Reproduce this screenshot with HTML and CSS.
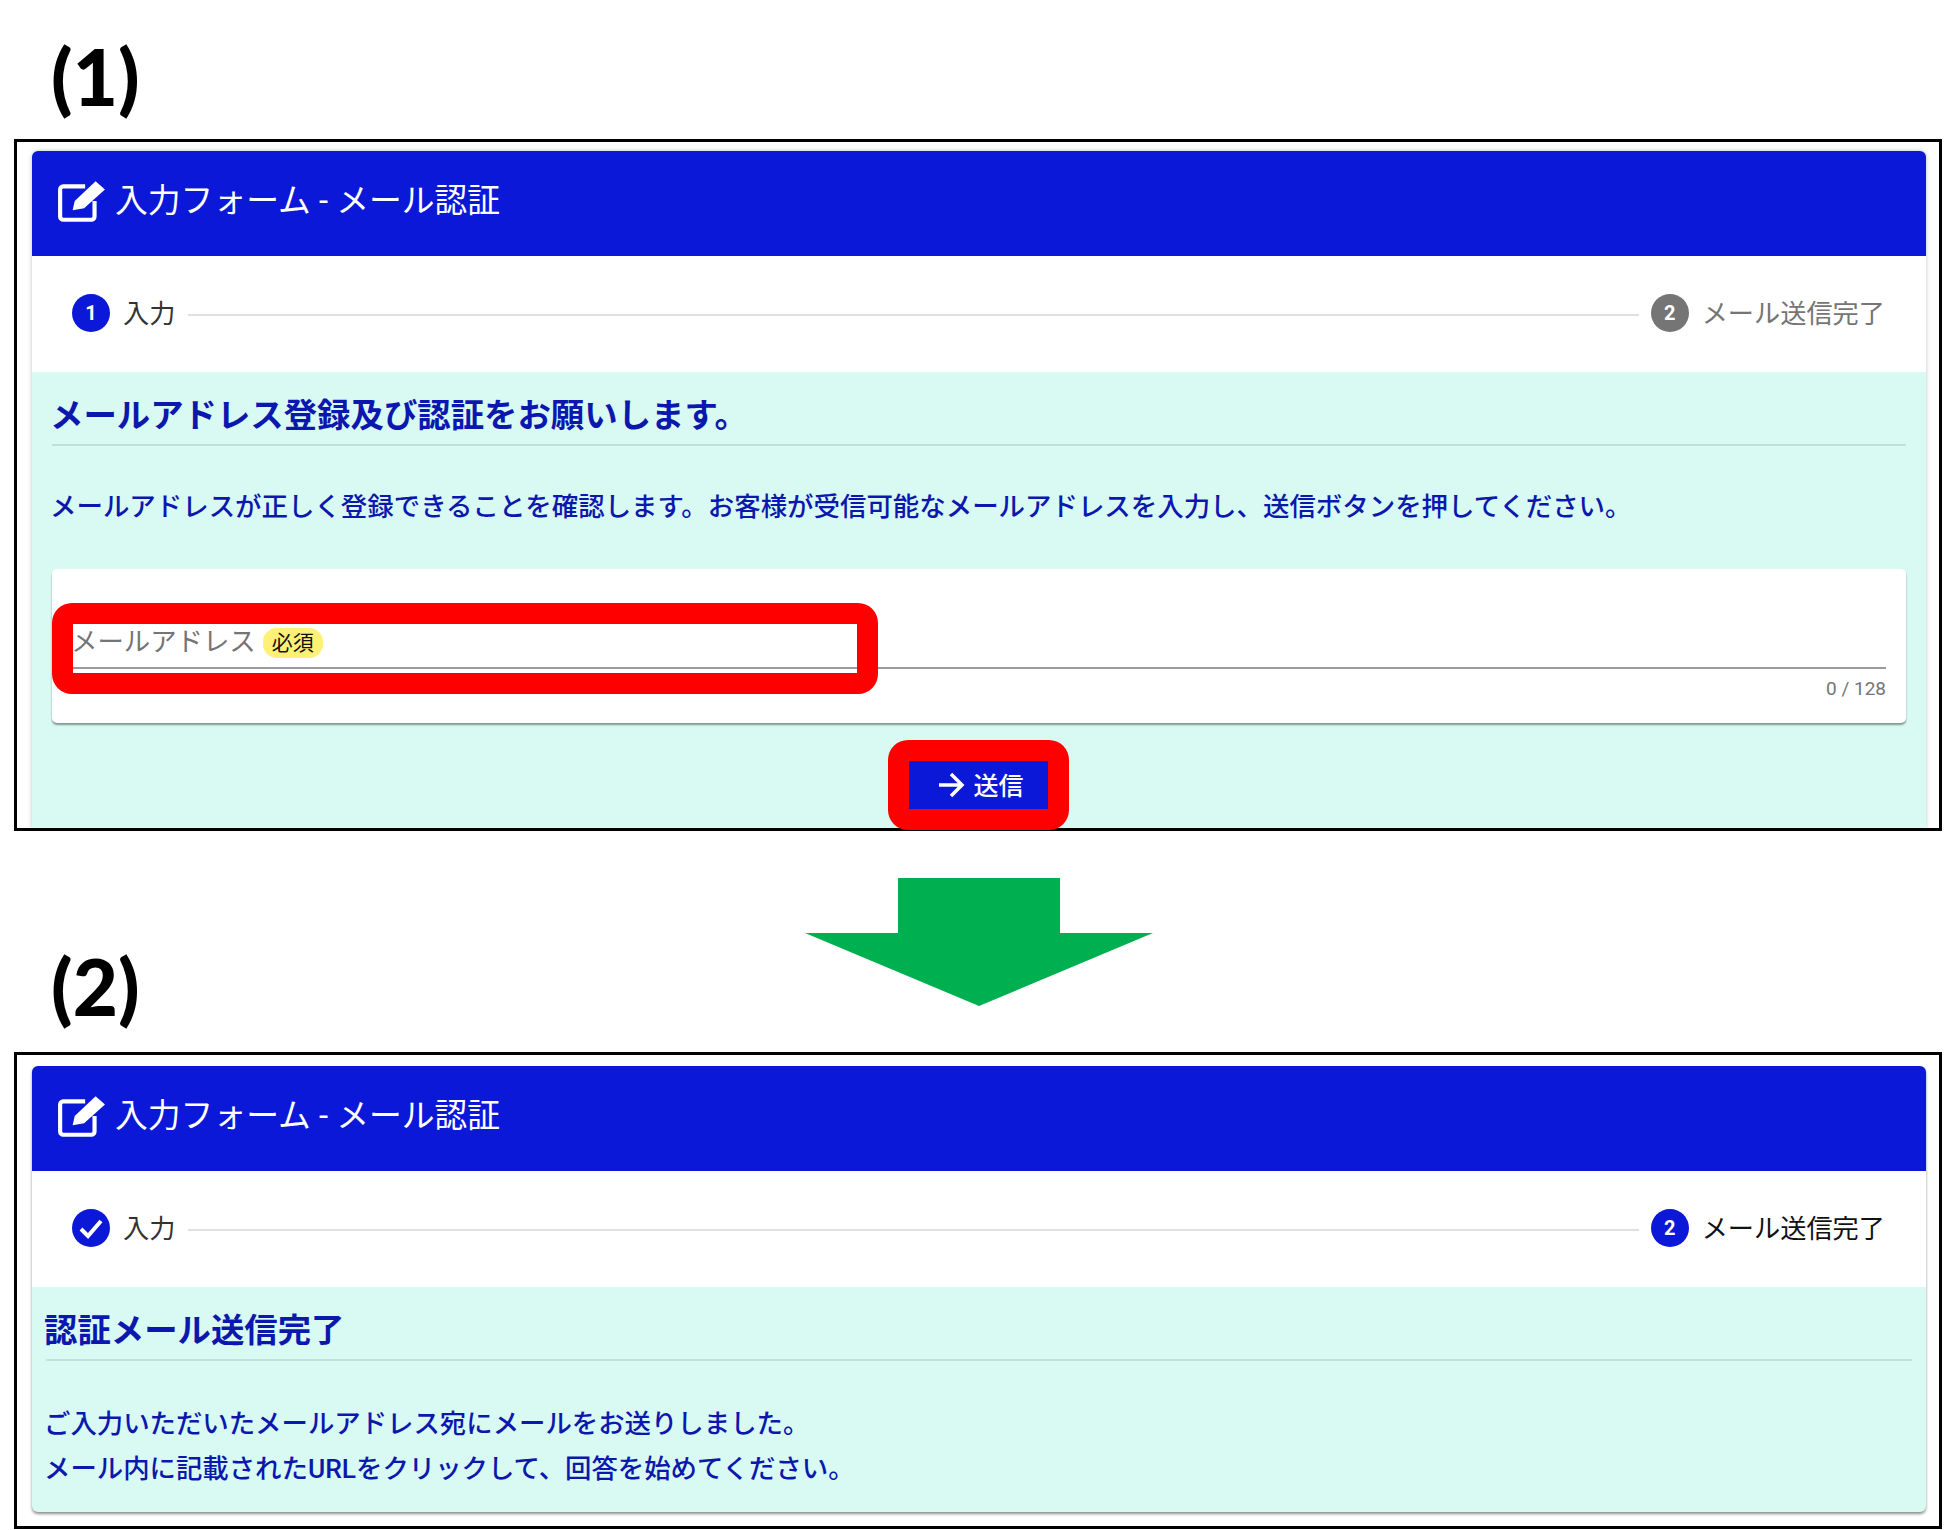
FILE: index.html
```html
<!DOCTYPE html>
<html lang="ja">
<head>
<meta charset="utf-8">
<title>メール認証</title>
<link rel="stylesheet" href="styles.css">
</head>
<body>
<main class="page">
  <div class="label-top"><span class="label">(1)</span></div>
  <section class="frame frame-one">
    <div class="card">
      <header class="card-head">
        <svg class="edit-icon" viewBox="0 0 47 41"><path class="edit-box" d="M27 6H6a3 3 0 0 0-3 3v26a3 3 0 0 0 3 3h27a3 3 0 0 0 3-3V20"/><path class="edit-pen" d="M15 29l2-9L37 1l9 8-20 18z"/></svg>
        <span class="card-name">入力フォーム - メール認証</span>
      </header>
      <div class="stepper">
        <span class="step-dot">1</span><span class="step-text">入力</span>
        <span class="step-line"></span>
        <span class="step-dot dot-off">2</span><span class="step-text text-off">メール送信完了</span>
      </div>
      <div class="body body-one">
        <h2 class="title">メールアドレス登録及び認証をお願いします。</h2>
        <p class="intro">メールアドレスが正しく登録できることを確認します。お客様が受信可能なメールアドレスを入力し、送信ボタンを押してください。</p>
        <div class="field-card">
          <div class="field"><span class="placeholder">メールアドレス</span><span class="badge">必須</span></div>
          <div class="counter">0 / 128</div>
        </div>
        <div class="actions">
          <button class="send" type="button">
            <svg class="send-icon" viewBox="0 0 28 28"><path d="M2 14h23M14 3l11 11-11 11"/></svg>
            <span class="send-text">送信</span>
          </button>
        </div>
      </div>
    </div>
    <div class="mark mark-field"></div>
    <div class="mark mark-send"></div>
  </section>
  <div class="between">
    <svg class="down-arrow" viewBox="0 0 348 128"><path d="M93 0H255V55H348L174 128 0 55H93z"/></svg>
    <span class="label label-two">(2)</span>
  </div>
  <section class="frame frame-two">
    <div class="card card-done">
      <header class="card-head">
        <svg class="edit-icon" viewBox="0 0 47 41"><path class="edit-box" d="M27 6H6a3 3 0 0 0-3 3v26a3 3 0 0 0 3 3h27a3 3 0 0 0 3-3V20"/><path class="edit-pen" d="M15 29l2-9L37 1l9 8-20 18z"/></svg>
        <span class="card-name">入力フォーム - メール認証</span>
      </header>
      <div class="stepper">
        <svg class="check-dot" viewBox="0 0 38 38"><circle cx="19" cy="19" r="19"/><path d="M9 20l7 7 13-15"/></svg><span class="step-text">入力</span>
        <span class="step-line"></span>
        <span class="step-dot">2</span><span class="step-text text-on">メール送信完了</span>
      </div>
      <div class="body body-two">
        <h2 class="title">認証メール送信完了</h2>
        <p class="done-text">ご入力いただいたメールアドレス宛にメールをお送りしました。</p>
        <p class="done-text">メール内に記載されたURLをクリックして、回答を始めてください。</p>
      </div>
    </div>
  </section>
</main>
</body>
</html>
```
FILE: styles.css
```css
* { box-sizing: border-box; }
html, body { margin: 0; padding: 0; background: #fff; }
body { font-family: Roboto, "Noto Sans CJK JP", sans-serif; width: 1944px; height: 1530px; overflow: hidden; }
.page { padding-left: 14px; width: 1942px; }
.label { font-family: Lato, "Open Sans", sans-serif; font-weight: 900; font-size: 78px; line-height: 84px; color: #000; }
.label-top { height: 139px; padding: 34px 0 0 37px; }
.frame { position: relative; border: 3px solid #000; background: #fff; }
.frame-one { padding: 9px 13px 0 15px; height: 692px; }
.frame-two { padding: 11px 13px 0 15px; height: 477px; }
.between { display: grid; height: 221px; }
.down-arrow { grid-area: 1 / 1; width: 348px; height: 128px; margin: 47px 0 0 791px; fill: #00b050; }
.label-two { grid-area: 1 / 1; align-self: end; justify-self: start; margin: 0 0 24px 37px; }
.card { background: #d8faf3; border-radius: 6px 6px 0 0; box-shadow: 0 0 4px rgba(0, 0, 0, .25); height: 100%; }
.card-done { height: 446px; border-radius: 6px; box-shadow: 0 2px 3px rgba(0, 0, 0, .45); }
.card-head { height: 105px; background: #0c18d8; color: #fff; border-radius: 6px 6px 0 0; display: flex; align-items: center; gap: 9px; padding-left: 25px; font-size: 32.8px; font-weight: 400; }
.card-name { margin-bottom: 12px; }
.edit-icon { width: 49px; height: 43px; margin-bottom: 5px; flex: none; }
.edit-box { fill: none; stroke: #fff; stroke-width: 4; }
.edit-pen { fill: #fff; }
.stepper { height: 116px; background: #fff; display: flex; align-items: center; padding: 0 41px 0 40px; }
.step-dot { width: 38px; height: 38px; border-radius: 50%; background: #0c18d8; color: #fff; font-size: 20px; font-weight: 700; display: flex; align-items: center; justify-content: center; flex: none; margin-bottom: 2px; }
.check-dot { width: 38px; height: 38px; flex: none; margin-bottom: 2px; }
.check-dot circle { fill: #0c18d8; }
.check-dot path { fill: none; stroke: #fff; stroke-width: 4; }
.dot-off { background: #757575; }
.step-text { font-size: 26.2px; margin: 0 0 4px 13px; color: #333; font-weight: 400; }
.text-off { color: #757575; }
.text-on { color: #111; }
.step-line { flex: 1; height: 2px; background: #e0e0e0; margin: 2px 12px 0 13px; }
.body-one { padding: 0 20px; height: 458px; }
.body-two { padding: 0 14px; }
.title { margin: 0; height: 74px; padding-top: 24px; font-size: 33.4px; line-height: 40px; font-weight: 700; color: #0c18ad; border-bottom: 2px solid #c3dfd9; text-indent: -2px; }
.intro { margin: 40px 0 0; font-size: 26.45px; line-height: 42px; font-weight: 500; color: #0c18ad; white-space: nowrap; text-indent: -2px; }
.field-card { margin-top: 41px; height: 154px; background: #fff; border-radius: 5px; box-shadow: 0 2px 2px rgba(0, 0, 0, .4); padding: 56px 20px 0; }
.field { height: 44px; border-bottom: 2px solid #9a9a9a; display: flex; align-items: flex-start; }
.placeholder { font-size: 26.4px; line-height: 34px; color: #757575; font-weight: 400; margin-left: -1px; }
.badge { margin: 3px 0 0 7px; width: 60px; height: 30px; border-radius: 14px; background: #fff176; color: #111; font-size: 21px; line-height: 30px; text-align: center; }
.counter { text-align: right; font-size: 19px; line-height: 24px; margin-top: 8px; color: #757575; }
.actions { display: flex; justify-content: center; margin: 38px 1px 0 0; }
.send { width: 139px; height: 50px; border: 0; padding: 0 0 0 4px; background: #0c18d8; color: #fff; display: flex; align-items: center; justify-content: center; gap: 8px; font: 500 25px Roboto, "Noto Sans CJK JP", sans-serif; }
.send-icon { width: 28px; height: 28px; margin-bottom: 2px; fill: none; stroke: #fff; stroke-width: 3.5; }
.send-text { margin-bottom: 4px; }
.mark { position: absolute; border-style: solid; border-color: #f00; border-width: 21px; border-radius: 20px; }
.mark-field { left: 35px; top: 461px; width: 826px; height: 91px; }
.mark-send { left: 871px; top: 598px; width: 181px; height: 90px; }
.done-text { margin: 0; font-size: 26.4px; line-height: 45px; font-weight: 500; color: #0c18ad; white-space: nowrap; text-indent: -2px; }
.title + .done-text { margin-top: 41px; }
```
